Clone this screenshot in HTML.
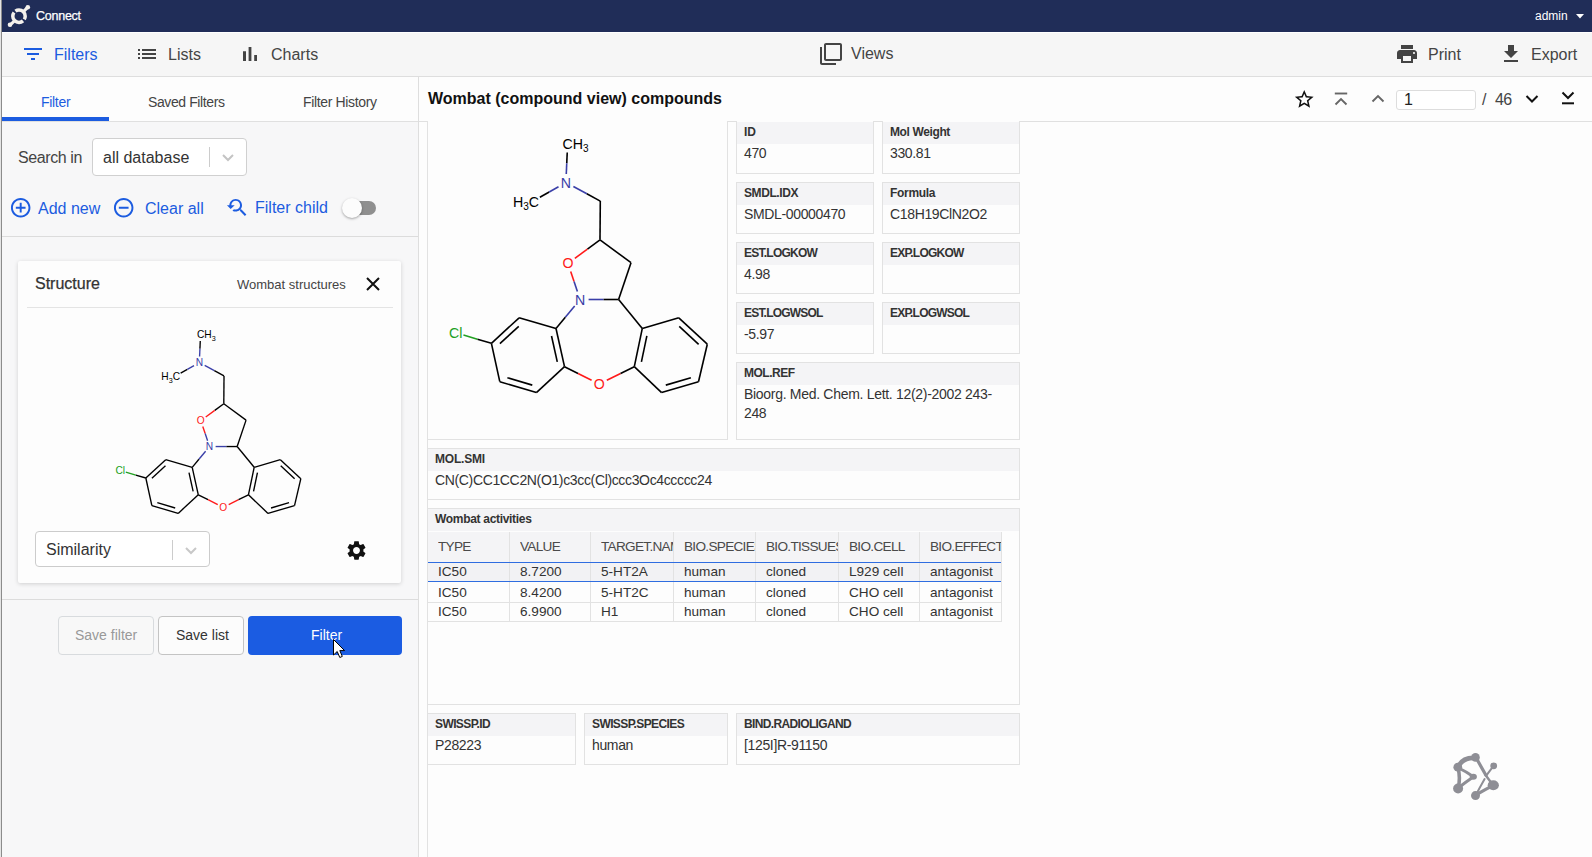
<!DOCTYPE html><html><head><meta charset="utf-8"><style>
*{box-sizing:border-box;margin:0;padding:0}
html,body{width:1592px;height:857px;overflow:hidden;background:#fdfdfd;font-family:"Liberation Sans",sans-serif;color:#333}
.a{position:absolute}
.t{position:absolute;white-space:nowrap;line-height:1}
svg{position:absolute;overflow:visible}
</style></head><body>
<div class="a" style="left:0px;top:0px;width:1px;height:857px;background:#e4e4e4"></div>
<div class="a" style="left:1px;top:0px;width:1px;height:857px;background:#8c8c8c"></div>
<div class="a" style="left:2px;top:0px;width:1590px;height:32px;background:#202d58"></div>
<div class="a" style="left:2px;top:32px;width:1590px;height:45px;background:#f6f6f6;border-top:1px solid #fff;border-bottom:1px solid #dedede"></div>
<div class="a" style="left:2px;top:77px;width:417px;height:780px;background:#f7f7f8;border-right:1px solid #dedede"></div>
<div class="a" style="left:2px;top:77px;width:416px;height:45px;background:#fdfdfd;border-bottom:1px solid #e0e0e0"></div>
<div class="a" style="left:2px;top:117px;width:107px;height:4px;background:#1c5ce0"></div>
<div class="a" style="left:419px;top:77px;width:1173px;height:45px;background:#fdfdfd;border-bottom:1px solid #e0e0e0"></div>
<div class="a" style="left:427px;top:122px;width:1px;height:735px;background:#e2e2e2"></div>
<svg style="left:0px;top:0px" width="40" height="32" viewBox="0 0 40 32"><g fill="none" stroke="#f4f1ec" stroke-width="3.5"><circle cx="19" cy="16.2" r="6.2" stroke-dasharray="3.4 1.8 17.7 1.8 14.26"/></g><g stroke="#f4f1ec" stroke-width="3" stroke-linecap="round"><line x1="23.5" y1="11.6" x2="27.6" y2="7.4"/><line x1="14.5" y1="20.8" x2="10.2" y2="24.8"/></g><g fill="#f4f1ec"><circle cx="27.8" cy="7.3" r="2.3"/><circle cx="10" cy="24.8" r="2.3"/></g></svg>
<div class="t" style="left:36px;top:10px;font-size:12.5px;color:#fff;font-weight:400;letter-spacing:-0.25px;-webkit-text-stroke:0.25px #fff">Connect</div>
<div class="t" style="left:1535px;top:10px;font-size:12px;color:#fff;font-weight:400;">admin</div>
<svg style="left:1576px;top:14px" width="8" height="5" viewBox="0 0 8 5"><path d="M0 0H8L4 4.5Z" fill="#fff"/></svg>
<svg style="left:21px;top:42px" width="24" height="24" viewBox="0 0 24 24"><path d="M10 18h4v-2h-4v2zM3 6v2h18V6H3zm3 7h12v-2H6v2z" fill="#1c5ce0"/></svg>
<div class="t" style="left:54px;top:47px;font-size:16px;color:#1c5ce0;font-weight:400;">Filters</div>
<svg style="left:135px;top:42px" width="24" height="24" viewBox="0 0 24 24"><path d="M3 13h2v-2H3v2zm0 4h2v-2H3v2zm0-8h2V7H3v2zm4 4h14v-2H7v2zm0 4h14v-2H7v2zM7 7v2h14V7H7z" fill="#444"/></svg>
<div class="t" style="left:168px;top:47px;font-size:16px;color:#444;font-weight:400;">Lists</div>
<svg style="left:238px;top:42px" width="24" height="24" viewBox="0 0 24 24"><path d="M5 9.2h3V19H5zM10.6 5h2.8v14h-2.8zm5.6 8H19v6h-2.8z" fill="#444"/></svg>
<div class="t" style="left:271px;top:47px;font-size:16px;color:#444;font-weight:400;">Charts</div>
<svg style="left:819px;top:42px" width="24" height="24" viewBox="0 0 24 24"><path d="M3 5H1v16c0 1.1.9 2 2 2h14v-2H3V5zm18-4H7c-1.1 0-2 .9-2 2v14c0 1.1.9 2 2 2h14c1.1 0 2-.9 2-2V3c0-1.1-.9-2-2-2zm0 16H7V3h14v14z" fill="#444"/></svg>
<div class="t" style="left:851px;top:46px;font-size:16px;color:#444;font-weight:400;">Views</div>
<svg style="left:1395px;top:42px" width="24" height="24" viewBox="0 0 24 24"><path d="M19 8H5c-1.66 0-3 1.34-3 3v6h4v4h12v-4h4v-6c0-1.66-1.34-3-3-3zm-3 11H8v-5h8v5zm3-7c-.55 0-1-.45-1-1s.45-1 1-1 1 .45 1 1-.45 1-1 1zm-1-9H6v4h12V3z" fill="#444"/></svg>
<div class="t" style="left:1428px;top:47px;font-size:16px;color:#444;font-weight:400;">Print</div>
<svg style="left:1499px;top:42px" width="24" height="24" viewBox="0 0 24 24"><path d="M19 9h-4V3H9v6H5l7 7 7-7zM5 18v2h14v-2H5z" fill="#444"/></svg>
<div class="t" style="left:1531px;top:47px;font-size:16px;color:#444;font-weight:400;">Export</div>
<div class="t" style="left:41px;top:95px;font-size:14px;color:#1c5ce0;font-weight:400;letter-spacing:-0.3px">Filter</div>
<div class="t" style="left:148px;top:95px;font-size:14px;color:#444;font-weight:400;letter-spacing:-0.4px">Saved Filters</div>
<div class="t" style="left:303px;top:95px;font-size:14px;color:#444;font-weight:400;letter-spacing:-0.35px">Filter History</div>
<div class="t" style="left:18px;top:150px;font-size:16px;color:#444;font-weight:400;letter-spacing:-0.4px">Search in</div>
<div class="a" style="left:92px;top:138px;width:155px;height:38px;background:#fff;border:1px solid #d0d0d0;border-radius:4px"></div>
<div class="t" style="left:103px;top:150px;font-size:16px;color:#333;font-weight:400;">all database</div>
<div class="a" style="left:209px;top:147px;width:1px;height:20px;background:#ccc"></div>
<svg style="left:222px;top:154px" width="12" height="7" viewBox="0 0 12 7"><path d="M1 1L6 6L11 1" fill="none" stroke="#c4c4c4" stroke-width="2"/></svg>
<svg style="left:8.6px;top:196px" width="23.4" height="23.4" viewBox="0 0 24 24"><path d="M13 7h-2v4H7v2h4v4h2v-4h4v-2h-4V7zm-1-5C6.48 2 2 6.48 2 12s4.48 10 10 10 10-4.48 10-10S17.52 2 12 2zm0 18c-4.41 0-8-3.59-8-8s3.59-8 8-8 8 3.59 8 8-3.59 8-8 8z" fill="#1c5ce0"/></svg>
<div class="t" style="left:38px;top:201px;font-size:16px;color:#1c5ce0;font-weight:400;">Add new</div>
<svg style="left:112px;top:196px" width="23.4" height="23.4" viewBox="0 0 24 24"><path d="M7 11v2h10v-2H7zm5-9C6.48 2 2 6.48 2 12s4.48 10 10 10 10-4.48 10-10S17.52 2 12 2zm0 18c-4.41 0-8-3.59-8-8s3.59-8 8-8 8 3.59 8 8-3.59 8-8 8z" fill="#1c5ce0"/></svg>
<div class="t" style="left:145px;top:201px;font-size:16px;color:#1c5ce0;font-weight:400;">Clear all</div>
<svg style="left:225px;top:196px" width="23.3" height="23.3" viewBox="0 0 24 24"><path d="M17.01 14h-.8l-.27-.27c.98-1.14 1.57-2.61 1.57-4.23 0-3.59-2.91-6.5-6.5-6.5s-6.5 3-6.5 6.5H2l3.84 4 4.16-4H6.51C6.51 7 8.53 5 11.01 5s4.5 2.01 4.5 4.5c0 2.48-2.02 4.5-4.5 4.5-.65 0-1.26-.14-1.82-.38L7.71 15.1c.97.57 2.09.9 3.3.9 1.61 0 3.08-.59 4.22-1.57l.27.27v.79l5.01 4.99L22 19l-4.99-5z" fill="#1c5ce0"/></svg>
<div class="t" style="left:255px;top:200px;font-size:16px;color:#1c5ce0;font-weight:400;">Filter child</div>
<div class="a" style="left:345px;top:201px;width:31px;height:14px;background:#8f8f8f;border-radius:7px"></div>
<div class="a" style="left:342px;top:198px;width:20px;height:20px;background:#fcfcfc;border-radius:50%;box-shadow:0 1px 2.5px rgba(0,0,0,.35)"></div>
<div class="a" style="left:2px;top:236px;width:416px;height:1px;background:#dcdcdc"></div>
<div class="a" style="left:18px;top:261px;width:383px;height:322px;background:#fdfdfd;border-radius:2px;box-shadow:0 1px 4px rgba(0,0,0,.16)"></div>
<div class="t" style="left:35px;top:276px;font-size:16px;color:#333;font-weight:400;-webkit-text-stroke:0.25px #333">Structure</div>
<div class="t" style="left:237px;top:278px;font-size:13px;color:#444;font-weight:400;">Wombat structures</div>
<svg style="left:366px;top:277px" width="14" height="14" viewBox="0 0 14 14"><path d="M1 1L13 13M13 1L1 13" stroke="#111" stroke-width="2"/></svg>
<div class="a" style="left:27px;top:307px;width:366px;height:1px;background:#e4e4e4"></div>
<svg style="left:0;top:0" width="1592" height="857" viewBox="0 0 1592 857"><g transform="translate(-207,231.5) scale(0.718)"><line x1="567.23" y1="152.49" x2="566.75" y2="163.25" stroke="#000" stroke-width="1.9"/><line x1="566.75" y1="163.25" x2="566.27" y2="174.01" stroke="#3a3fa8" stroke-width="1.9"/><line x1="539.89" y1="197.30" x2="549.20" y2="192.00" stroke="#000" stroke-width="1.9"/><line x1="549.20" y1="192.00" x2="558.51" y2="186.70" stroke="#3a3fa8" stroke-width="1.9"/><line x1="573.38" y1="186.54" x2="586.84" y2="193.82" stroke="#3a3fa8" stroke-width="1.9"/><line x1="586.84" y1="193.82" x2="600.30" y2="201.10" stroke="#000" stroke-width="1.9"/><line x1="600.30" y1="201.10" x2="600.00" y2="239.80" stroke="#000" stroke-width="1.9"/><line x1="600.00" y1="239.80" x2="587.42" y2="249.08" stroke="#000" stroke-width="1.9"/><line x1="587.42" y1="249.08" x2="574.84" y2="258.35" stroke="#ff1a1a" stroke-width="1.9"/><line x1="600.00" y1="239.80" x2="631.00" y2="262.70" stroke="#000" stroke-width="1.9"/><line x1="631.00" y1="262.70" x2="618.60" y2="299.50" stroke="#000" stroke-width="1.9"/><line x1="570.70" y1="271.46" x2="574.05" y2="281.45" stroke="#ff1a1a" stroke-width="1.9"/><line x1="574.05" y1="281.45" x2="577.40" y2="291.44" stroke="#3a3fa8" stroke-width="1.9"/><line x1="588.60" y1="299.50" x2="603.60" y2="299.50" stroke="#3a3fa8" stroke-width="1.9"/><line x1="603.60" y1="299.50" x2="618.60" y2="299.50" stroke="#000" stroke-width="1.9"/><line x1="574.67" y1="306.04" x2="565.33" y2="317.27" stroke="#3a3fa8" stroke-width="1.9"/><line x1="565.33" y1="317.27" x2="556.00" y2="328.50" stroke="#000" stroke-width="1.9"/><line x1="618.60" y1="299.50" x2="642.30" y2="328.40" stroke="#000" stroke-width="1.9"/><line x1="556.00" y1="328.50" x2="519.10" y2="317.80" stroke="#000" stroke-width="1.9"/><line x1="519.10" y1="317.80" x2="491.40" y2="343.30" stroke="#000" stroke-width="1.9"/><line x1="491.40" y1="343.30" x2="499.80" y2="381.70" stroke="#000" stroke-width="1.9"/><line x1="499.80" y1="381.70" x2="536.40" y2="392.60" stroke="#000" stroke-width="1.9"/><line x1="536.40" y1="392.60" x2="564.50" y2="366.70" stroke="#000" stroke-width="1.9"/><line x1="564.50" y1="366.70" x2="556.00" y2="328.50" stroke="#000" stroke-width="1.9"/><line x1="491.40" y1="343.30" x2="477.44" y2="339.18" stroke="#000" stroke-width="1.9"/><line x1="477.44" y1="339.18" x2="463.47" y2="335.06" stroke="#22a022" stroke-width="1.9"/><line x1="564.50" y1="366.70" x2="578.05" y2="373.49" stroke="#000" stroke-width="1.9"/><line x1="578.05" y1="373.49" x2="591.60" y2="380.29" stroke="#ff1a1a" stroke-width="1.9"/><line x1="606.82" y1="380.32" x2="620.56" y2="373.51" stroke="#ff1a1a" stroke-width="1.9"/><line x1="620.56" y1="373.51" x2="634.30" y2="366.70" stroke="#000" stroke-width="1.9"/><line x1="642.30" y1="328.40" x2="678.80" y2="317.80" stroke="#000" stroke-width="1.9"/><line x1="678.80" y1="317.80" x2="707.30" y2="344.20" stroke="#000" stroke-width="1.9"/><line x1="707.30" y1="344.20" x2="698.50" y2="381.70" stroke="#000" stroke-width="1.9"/><line x1="698.50" y1="381.70" x2="661.60" y2="392.60" stroke="#000" stroke-width="1.9"/><line x1="661.60" y1="392.60" x2="634.30" y2="366.70" stroke="#000" stroke-width="1.9"/><line x1="634.30" y1="366.70" x2="642.30" y2="328.40" stroke="#000" stroke-width="1.9"/><line x1="518.74" y1="326.29" x2="499.90" y2="343.63" stroke="#000" stroke-width="1.9"/><line x1="551.52" y1="335.97" x2="557.30" y2="361.94" stroke="#000" stroke-width="1.9"/><line x1="507.41" y1="377.71" x2="532.30" y2="385.12" stroke="#000" stroke-width="1.9"/><line x1="646.86" y1="335.90" x2="641.42" y2="361.94" stroke="#000" stroke-width="1.9"/><line x1="679.26" y1="326.41" x2="698.64" y2="344.36" stroke="#000" stroke-width="1.9"/><line x1="690.88" y1="377.69" x2="665.79" y2="385.11" stroke="#000" stroke-width="1.9"/><text x="565.90" y="187.50" fill="#3a3fa8" font-size="14.2" text-anchor="middle" font-family="Liberation Sans">N</text><text x="580.10" y="304.50" fill="#3a3fa8" font-size="14.2" text-anchor="middle" font-family="Liberation Sans">N</text><text x="568.00" y="268.40" fill="#ff1a1a" font-size="14.2" text-anchor="middle" font-family="Liberation Sans">O</text><text x="599.20" y="389.10" fill="#ff1a1a" font-size="14.2" text-anchor="middle" font-family="Liberation Sans">O</text><text x="455.80" y="337.80" fill="#22a022" font-size="14.2" text-anchor="middle" font-family="Liberation Sans">Cl</text><text x="562.60" y="148.60" fill="#000" font-size="14.2" font-family="Liberation Sans">CH<tspan font-size="10" dy="3.5">3</tspan></text><text x="513.00" y="206.90" fill="#000" font-size="14.2" font-family="Liberation Sans">H<tspan font-size="10" dy="3.5">3</tspan><tspan dy="-3.5">C</tspan></text></g></svg>
<div class="a" style="left:35px;top:531px;width:175px;height:36px;background:#fff;border:1px solid #ccc;border-radius:4px"></div>
<div class="t" style="left:46px;top:542px;font-size:16px;color:#333;font-weight:400;">Similarity</div>
<div class="a" style="left:172px;top:540px;width:1px;height:20px;background:#ccc"></div>
<svg style="left:185px;top:547px" width="12" height="7" viewBox="0 0 12 7"><path d="M1 1L6 6L11 1" fill="none" stroke="#c8c8c8" stroke-width="2"/></svg>
<svg style="left:345px;top:539px" width="23" height="23" viewBox="0 0 24 24"><path d="M19.14 12.94c.04-.3.06-.61.06-.94 0-.32-.02-.64-.07-.94l2.03-1.58c.18-.14.23-.41.12-.61l-1.92-3.32c-.12-.22-.37-.29-.59-.22l-2.39.96c-.5-.38-1.03-.7-1.62-.94l-.36-2.54c-.04-.24-.24-.41-.48-.41h-3.84c-.24 0-.43.17-.47.41l-.36 2.54c-.59.24-1.13.57-1.62.94l-2.39-.96c-.22-.08-.47 0-.59.22L2.74 8.87c-.12.21-.08.47.12.61l2.03 1.58c-.05.3-.09.63-.09.94s.02.64.07.94l-2.03 1.58c-.18.14-.23.41-.12.61l1.92 3.32c.12.22.37.29.59.22l2.39-.96c.5.38 1.03.7 1.62.94l.36 2.54c.05.24.24.41.48.41h3.84c.24 0 .44-.17.47-.41l.36-2.54c.59-.24 1.13-.56 1.62-.94l2.39.96c.22.08.47 0 .59-.22l1.92-3.32c.12-.22.07-.47-.12-.61l-2.01-1.58zM12 15.6c-1.98 0-3.6-1.62-3.6-3.6s1.62-3.6 3.6-3.6 3.6 1.62 3.6 3.6-1.62 3.6-3.6 3.6z" fill="#111"/></svg>
<div class="a" style="left:2px;top:599px;width:416px;height:1px;background:#dcdcdc"></div>
<div class="a" style="left:58px;top:616px;width:96px;height:39px;background:#f8f8f8;border:1px solid #d8dbde;border-radius:4px"></div>
<div class="t" style="left:75px;top:628px;font-size:14px;color:#999;font-weight:400;">Save filter</div>
<div class="a" style="left:158px;top:616px;width:86px;height:39px;background:#fcfcfc;border:1px solid #c4c4c4;border-radius:4px"></div>
<div class="t" style="left:176px;top:628px;font-size:14px;color:#333;font-weight:400;">Save list</div>
<div class="a" style="left:248px;top:616px;width:154px;height:39px;background:#1b5ce2;border-radius:4px"></div>
<div class="t" style="left:311px;top:628px;font-size:14px;color:#fff;font-weight:400;">Filter</div>
<svg style="left:333px;top:639px" width="13" height="20" viewBox="0 0 13 20"><path d="M0.5 0.5V16L4.2 12.5L6.8 18.5L9.3 17.4L6.8 11.6H11.6Z" fill="#fff" stroke="#000" stroke-width="1"/></svg>
<div class="t" style="left:428px;top:91px;font-size:16px;color:#111;font-weight:700;">Wombat (compound view) compounds</div>
<svg style="left:1292.5px;top:87.9px" width="22.5" height="22.5" viewBox="0 0 24 24"><path d="M22 9.24l-7.19-.62L12 2 9.19 8.63 2 9.24l5.46 4.73L5.82 21 12 17.27 18.18 21l-1.63-7.03L22 9.24zM12 15.4l-3.76 2.27 1-4.28-3.32-2.88 4.38-.38L12 6.1l1.71 4.04 4.38.38-3.32 2.88 1 4.28L12 15.4z" fill="#111"/></svg>
<svg style="left:1334px;top:92px" width="14" height="14" viewBox="0 0 14 14"><g fill="none" stroke="#666" stroke-width="1.9"><path d="M0.8 1.5H13.2"/><path d="M1.5 12.5L7 7L12.5 12.5"/></g></svg>
<svg style="left:1371px;top:94px" width="14" height="9" viewBox="0 0 14 9"><path d="M1.5 7.5L7 2L12.5 7.5" fill="none" stroke="#666" stroke-width="1.9"/></svg>
<div class="a" style="left:1396px;top:90px;width:80px;height:20px;background:#fff;border:1px solid #ddd;border-radius:3px"></div>
<div class="t" style="left:1404px;top:92px;font-size:16px;color:#222;font-weight:400;">1</div>
<div class="t" style="left:1482px;top:92px;font-size:16px;color:#444;font-weight:400;">/</div>
<div class="t" style="left:1495px;top:92px;font-size:16px;color:#444;font-weight:400;letter-spacing:-0.6px">46</div>
<svg style="left:1525px;top:94px" width="14" height="10" viewBox="0 0 14 10"><path d="M1.5 2L7 7.5L12.5 2" fill="none" stroke="#111" stroke-width="2"/></svg>
<svg style="left:1561px;top:91px" width="14" height="15" viewBox="0 0 14 15"><g fill="none" stroke="#111" stroke-width="2"><path d="M1.5 1.5L7 7L12.5 1.5"/><path d="M1 12.3H13"/></g></svg>
<div class="a" style="left:427px;top:121px;width:301px;height:319px;background:#fdfdfd;border:1px solid #e2e2e2;border-top:none"></div>
<svg style="left:0;top:0" width="1592" height="857" viewBox="0 0 1592 857"><line x1="567.23" y1="152.49" x2="566.75" y2="163.25" stroke="#000" stroke-width="1.6"/><line x1="566.75" y1="163.25" x2="566.27" y2="174.01" stroke="#3a3fa8" stroke-width="1.6"/><line x1="539.89" y1="197.30" x2="549.20" y2="192.00" stroke="#000" stroke-width="1.6"/><line x1="549.20" y1="192.00" x2="558.51" y2="186.70" stroke="#3a3fa8" stroke-width="1.6"/><line x1="573.38" y1="186.54" x2="586.84" y2="193.82" stroke="#3a3fa8" stroke-width="1.6"/><line x1="586.84" y1="193.82" x2="600.30" y2="201.10" stroke="#000" stroke-width="1.6"/><line x1="600.30" y1="201.10" x2="600.00" y2="239.80" stroke="#000" stroke-width="1.6"/><line x1="600.00" y1="239.80" x2="587.42" y2="249.08" stroke="#000" stroke-width="1.6"/><line x1="587.42" y1="249.08" x2="574.84" y2="258.35" stroke="#ff1a1a" stroke-width="1.6"/><line x1="600.00" y1="239.80" x2="631.00" y2="262.70" stroke="#000" stroke-width="1.6"/><line x1="631.00" y1="262.70" x2="618.60" y2="299.50" stroke="#000" stroke-width="1.6"/><line x1="570.70" y1="271.46" x2="574.05" y2="281.45" stroke="#ff1a1a" stroke-width="1.6"/><line x1="574.05" y1="281.45" x2="577.40" y2="291.44" stroke="#3a3fa8" stroke-width="1.6"/><line x1="588.60" y1="299.50" x2="603.60" y2="299.50" stroke="#3a3fa8" stroke-width="1.6"/><line x1="603.60" y1="299.50" x2="618.60" y2="299.50" stroke="#000" stroke-width="1.6"/><line x1="574.67" y1="306.04" x2="565.33" y2="317.27" stroke="#3a3fa8" stroke-width="1.6"/><line x1="565.33" y1="317.27" x2="556.00" y2="328.50" stroke="#000" stroke-width="1.6"/><line x1="618.60" y1="299.50" x2="642.30" y2="328.40" stroke="#000" stroke-width="1.6"/><line x1="556.00" y1="328.50" x2="519.10" y2="317.80" stroke="#000" stroke-width="1.6"/><line x1="519.10" y1="317.80" x2="491.40" y2="343.30" stroke="#000" stroke-width="1.6"/><line x1="491.40" y1="343.30" x2="499.80" y2="381.70" stroke="#000" stroke-width="1.6"/><line x1="499.80" y1="381.70" x2="536.40" y2="392.60" stroke="#000" stroke-width="1.6"/><line x1="536.40" y1="392.60" x2="564.50" y2="366.70" stroke="#000" stroke-width="1.6"/><line x1="564.50" y1="366.70" x2="556.00" y2="328.50" stroke="#000" stroke-width="1.6"/><line x1="491.40" y1="343.30" x2="477.44" y2="339.18" stroke="#000" stroke-width="1.6"/><line x1="477.44" y1="339.18" x2="463.47" y2="335.06" stroke="#22a022" stroke-width="1.6"/><line x1="564.50" y1="366.70" x2="578.05" y2="373.49" stroke="#000" stroke-width="1.6"/><line x1="578.05" y1="373.49" x2="591.60" y2="380.29" stroke="#ff1a1a" stroke-width="1.6"/><line x1="606.82" y1="380.32" x2="620.56" y2="373.51" stroke="#ff1a1a" stroke-width="1.6"/><line x1="620.56" y1="373.51" x2="634.30" y2="366.70" stroke="#000" stroke-width="1.6"/><line x1="642.30" y1="328.40" x2="678.80" y2="317.80" stroke="#000" stroke-width="1.6"/><line x1="678.80" y1="317.80" x2="707.30" y2="344.20" stroke="#000" stroke-width="1.6"/><line x1="707.30" y1="344.20" x2="698.50" y2="381.70" stroke="#000" stroke-width="1.6"/><line x1="698.50" y1="381.70" x2="661.60" y2="392.60" stroke="#000" stroke-width="1.6"/><line x1="661.60" y1="392.60" x2="634.30" y2="366.70" stroke="#000" stroke-width="1.6"/><line x1="634.30" y1="366.70" x2="642.30" y2="328.40" stroke="#000" stroke-width="1.6"/><line x1="518.74" y1="326.29" x2="499.90" y2="343.63" stroke="#000" stroke-width="1.6"/><line x1="551.52" y1="335.97" x2="557.30" y2="361.94" stroke="#000" stroke-width="1.6"/><line x1="507.41" y1="377.71" x2="532.30" y2="385.12" stroke="#000" stroke-width="1.6"/><line x1="646.86" y1="335.90" x2="641.42" y2="361.94" stroke="#000" stroke-width="1.6"/><line x1="679.26" y1="326.41" x2="698.64" y2="344.36" stroke="#000" stroke-width="1.6"/><line x1="690.88" y1="377.69" x2="665.79" y2="385.11" stroke="#000" stroke-width="1.6"/><text x="565.90" y="187.50" fill="#3a3fa8" font-size="14.2" text-anchor="middle" font-family="Liberation Sans">N</text><text x="580.10" y="304.50" fill="#3a3fa8" font-size="14.2" text-anchor="middle" font-family="Liberation Sans">N</text><text x="568.00" y="268.40" fill="#ff1a1a" font-size="14.2" text-anchor="middle" font-family="Liberation Sans">O</text><text x="599.20" y="389.10" fill="#ff1a1a" font-size="14.2" text-anchor="middle" font-family="Liberation Sans">O</text><text x="455.80" y="337.80" fill="#22a022" font-size="14.2" text-anchor="middle" font-family="Liberation Sans">Cl</text><text x="562.60" y="148.60" fill="#000" font-size="14.2" font-family="Liberation Sans">CH<tspan font-size="10" dy="3.5">3</tspan></text><text x="513.00" y="206.90" fill="#000" font-size="14.2" font-family="Liberation Sans">H<tspan font-size="10" dy="3.5">3</tspan><tspan dy="-3.5">C</tspan></text></svg>
<div class="a" style="left:736px;top:121px;width:138px;height:53px;background:#fdfdfd;border:1px solid #e2e2e2;border-top:none"></div>
<div class="a" style="left:737px;top:122px;width:136px;height:22px;background:#f4f4f6"></div>
<div class="t" style="left:744px;top:126px;font-size:12px;color:#333;font-weight:700;letter-spacing:0px">ID</div>
<div class="t" style="left:744px;top:146px;font-size:14px;color:#333;font-weight:400;letter-spacing:-0.35px">470</div>
<div class="a" style="left:882px;top:121px;width:138px;height:53px;background:#fdfdfd;border:1px solid #e2e2e2;border-top:none"></div>
<div class="a" style="left:883px;top:122px;width:136px;height:22px;background:#f4f4f6"></div>
<div class="t" style="left:890px;top:126px;font-size:12px;color:#333;font-weight:700;letter-spacing:-0.38px">Mol Weight</div>
<div class="t" style="left:890px;top:146px;font-size:14px;color:#333;font-weight:400;letter-spacing:-0.35px">330.81</div>
<div class="a" style="left:736px;top:182px;width:138px;height:52px;background:#fdfdfd;border:1px solid #e2e2e2"></div>
<div class="a" style="left:737px;top:183px;width:136px;height:22px;background:#f4f4f6"></div>
<div class="t" style="left:744px;top:187px;font-size:12px;color:#333;font-weight:700;letter-spacing:-0.42px">SMDL.IDX</div>
<div class="t" style="left:744px;top:207px;font-size:14px;color:#333;font-weight:400;letter-spacing:-0.35px">SMDL-00000470</div>
<div class="a" style="left:882px;top:182px;width:138px;height:52px;background:#fdfdfd;border:1px solid #e2e2e2"></div>
<div class="a" style="left:883px;top:183px;width:136px;height:22px;background:#f4f4f6"></div>
<div class="t" style="left:890px;top:187px;font-size:12px;color:#333;font-weight:700;letter-spacing:-0.3px">Formula</div>
<div class="t" style="left:890px;top:207px;font-size:14px;color:#333;font-weight:400;letter-spacing:-0.35px">C18H19ClN2O2</div>
<div class="a" style="left:736px;top:242px;width:138px;height:52px;background:#fdfdfd;border:1px solid #e2e2e2"></div>
<div class="a" style="left:737px;top:243px;width:136px;height:22px;background:#f4f4f6"></div>
<div class="t" style="left:744px;top:247px;font-size:12px;color:#333;font-weight:700;letter-spacing:-0.75px">EST.LOGKOW</div>
<div class="t" style="left:744px;top:267px;font-size:14px;color:#333;font-weight:400;letter-spacing:-0.35px">4.98</div>
<div class="a" style="left:882px;top:242px;width:138px;height:52px;background:#fdfdfd;border:1px solid #e2e2e2"></div>
<div class="a" style="left:883px;top:243px;width:136px;height:22px;background:#f4f4f6"></div>
<div class="t" style="left:890px;top:247px;font-size:12px;color:#333;font-weight:700;letter-spacing:-0.75px">EXP.LOGKOW</div>
<div class="a" style="left:736px;top:302px;width:138px;height:52px;background:#fdfdfd;border:1px solid #e2e2e2"></div>
<div class="a" style="left:737px;top:303px;width:136px;height:22px;background:#f4f4f6"></div>
<div class="t" style="left:744px;top:307px;font-size:12px;color:#333;font-weight:700;letter-spacing:-0.8px">EST.LOGWSOL</div>
<div class="t" style="left:744px;top:327px;font-size:14px;color:#333;font-weight:400;letter-spacing:-0.35px">-5.97</div>
<div class="a" style="left:882px;top:302px;width:138px;height:52px;background:#fdfdfd;border:1px solid #e2e2e2"></div>
<div class="a" style="left:883px;top:303px;width:136px;height:22px;background:#f4f4f6"></div>
<div class="t" style="left:890px;top:307px;font-size:12px;color:#333;font-weight:700;letter-spacing:-0.8px">EXP.LOGWSOL</div>
<div class="a" style="left:736px;top:362px;width:284px;height:78px;background:#fdfdfd;border:1px solid #e2e2e2"></div>
<div class="a" style="left:737px;top:363px;width:282px;height:22px;background:#f4f4f6"></div>
<div class="t" style="left:744px;top:367px;font-size:12px;color:#333;font-weight:700;letter-spacing:-0.5px">MOL.REF</div>
<div class="t" style="left:744px;top:387px;font-size:14px;color:#333;font-weight:400;letter-spacing:-0.3px">Bioorg. Med. Chem. Lett. 12(2)-2002 243-</div>
<div class="t" style="left:744px;top:406px;font-size:14px;color:#333;font-weight:400;letter-spacing:-0.35px">248</div>
<div class="a" style="left:427px;top:448px;width:593px;height:52px;background:#fdfdfd;border:1px solid #e2e2e2"></div>
<div class="a" style="left:428px;top:449px;width:591px;height:22px;background:#f4f4f6"></div>
<div class="t" style="left:435px;top:453px;font-size:12px;color:#333;font-weight:700;letter-spacing:-0.2px">MOL.SMI</div>
<div class="t" style="left:435px;top:473px;font-size:14px;color:#333;font-weight:400;letter-spacing:-0.35px">CN(C)CC1CC2N(O1)c3cc(Cl)ccc3Oc4ccccc24</div>
<div class="a" style="left:427px;top:508px;width:593px;height:197px;background:#fdfdfd;border:1px solid #e2e2e2"></div>
<div class="a" style="left:428px;top:509px;width:591px;height:22px;background:#f4f4f6"></div>
<div class="t" style="left:435px;top:513px;font-size:12px;color:#333;font-weight:700;letter-spacing:-0.31px">Wombat activities</div>
<div class="a" style="left:428px;top:532px;width:573px;height:30px;background:#f4f4f6"></div>
<div class="a" style="left:428px;top:563px;width:573px;height:18px;background:#f2f2f4"></div>
<div class="a" style="left:428px;top:602px;width:573px;height:1px;background:#e2e2e2"></div>
<div class="a" style="left:428px;top:621px;width:573px;height:1px;background:#e2e2e2"></div>
<div class="a" style="left:509px;top:532px;width:1px;height:90px;background:#e2e2e2"></div>
<div class="a" style="left:590px;top:532px;width:1px;height:90px;background:#e2e2e2"></div>
<div class="a" style="left:673px;top:532px;width:1px;height:90px;background:#e2e2e2"></div>
<div class="a" style="left:755px;top:532px;width:1px;height:90px;background:#e2e2e2"></div>
<div class="a" style="left:838px;top:532px;width:1px;height:90px;background:#e2e2e2"></div>
<div class="a" style="left:919px;top:532px;width:1px;height:90px;background:#e2e2e2"></div>
<div class="a" style="left:1001px;top:532px;width:1px;height:90px;background:#e2e2e2"></div>
<div class="a" style="left:428px;top:562px;width:573px;height:1px;background:#2f6de0"></div>
<div class="a" style="left:428px;top:581px;width:573px;height:1px;background:#2f6de0"></div>
<div class="t" style="left:438px;top:540px;width:71px;overflow:hidden;font-size:13.6px;color:#4a4a4a;letter-spacing:-0.7px">TYPE</div>
<div class="t" style="left:520px;top:540px;width:70px;overflow:hidden;font-size:13.6px;color:#4a4a4a;letter-spacing:-0.7px">VALUE</div>
<div class="t" style="left:601px;top:540px;width:72px;overflow:hidden;font-size:13.6px;color:#4a4a4a;letter-spacing:-0.7px">TARGET.NAME</div>
<div class="t" style="left:684px;top:540px;width:71px;overflow:hidden;font-size:13.6px;color:#4a4a4a;letter-spacing:-0.7px">BIO.SPECIES</div>
<div class="t" style="left:766px;top:540px;width:72px;overflow:hidden;font-size:13.6px;color:#4a4a4a;letter-spacing:-0.7px">BIO.TISSUES</div>
<div class="t" style="left:849px;top:540px;width:70px;overflow:hidden;font-size:13.6px;color:#4a4a4a;letter-spacing:-0.7px">BIO.CELL</div>
<div class="t" style="left:930px;top:540px;width:71px;overflow:hidden;font-size:13.6px;color:#4a4a4a;letter-spacing:-0.7px">BIO.EFFECT</div>
<div class="t" style="left:438px;top:565px;width:71px;overflow:hidden;font-size:13.6px;color:#333;letter-spacing:0px">IC50</div>
<div class="t" style="left:520px;top:565px;width:70px;overflow:hidden;font-size:13.6px;color:#333;letter-spacing:0px">8.7200</div>
<div class="t" style="left:601px;top:565px;width:72px;overflow:hidden;font-size:13.6px;color:#333;letter-spacing:0px">5-HT2A</div>
<div class="t" style="left:684px;top:565px;width:71px;overflow:hidden;font-size:13.6px;color:#333;letter-spacing:0px">human</div>
<div class="t" style="left:766px;top:565px;width:72px;overflow:hidden;font-size:13.6px;color:#333;letter-spacing:0px">cloned</div>
<div class="t" style="left:849px;top:565px;width:70px;overflow:hidden;font-size:13.6px;color:#333;letter-spacing:0px">L929 cell</div>
<div class="t" style="left:930px;top:565px;width:71px;overflow:hidden;font-size:13.6px;color:#333;letter-spacing:0px">antagonist</div>
<div class="t" style="left:438px;top:586px;width:71px;overflow:hidden;font-size:13.6px;color:#333;letter-spacing:0px">IC50</div>
<div class="t" style="left:520px;top:586px;width:70px;overflow:hidden;font-size:13.6px;color:#333;letter-spacing:0px">8.4200</div>
<div class="t" style="left:601px;top:586px;width:72px;overflow:hidden;font-size:13.6px;color:#333;letter-spacing:0px">5-HT2C</div>
<div class="t" style="left:684px;top:586px;width:71px;overflow:hidden;font-size:13.6px;color:#333;letter-spacing:0px">human</div>
<div class="t" style="left:766px;top:586px;width:72px;overflow:hidden;font-size:13.6px;color:#333;letter-spacing:0px">cloned</div>
<div class="t" style="left:849px;top:586px;width:70px;overflow:hidden;font-size:13.6px;color:#333;letter-spacing:0px">CHO cell</div>
<div class="t" style="left:930px;top:586px;width:71px;overflow:hidden;font-size:13.6px;color:#333;letter-spacing:0px">antagonist</div>
<div class="t" style="left:438px;top:605px;width:71px;overflow:hidden;font-size:13.6px;color:#333;letter-spacing:0px">IC50</div>
<div class="t" style="left:520px;top:605px;width:70px;overflow:hidden;font-size:13.6px;color:#333;letter-spacing:0px">6.9900</div>
<div class="t" style="left:601px;top:605px;width:72px;overflow:hidden;font-size:13.6px;color:#333;letter-spacing:0px">H1</div>
<div class="t" style="left:684px;top:605px;width:71px;overflow:hidden;font-size:13.6px;color:#333;letter-spacing:0px">human</div>
<div class="t" style="left:766px;top:605px;width:72px;overflow:hidden;font-size:13.6px;color:#333;letter-spacing:0px">cloned</div>
<div class="t" style="left:849px;top:605px;width:70px;overflow:hidden;font-size:13.6px;color:#333;letter-spacing:0px">CHO cell</div>
<div class="t" style="left:930px;top:605px;width:71px;overflow:hidden;font-size:13.6px;color:#333;letter-spacing:0px">antagonist</div>
<div class="a" style="left:427px;top:713px;width:149px;height:52px;background:#fdfdfd;border:1px solid #e2e2e2"></div>
<div class="a" style="left:428px;top:714px;width:147px;height:22px;background:#f4f4f6"></div>
<div class="t" style="left:435px;top:718px;font-size:12px;color:#333;font-weight:700;letter-spacing:-0.6px">SWISSP.ID</div>
<div class="t" style="left:435px;top:738px;font-size:14px;color:#333;font-weight:400;letter-spacing:-0.35px">P28223</div>
<div class="a" style="left:584px;top:713px;width:144px;height:52px;background:#fdfdfd;border:1px solid #e2e2e2"></div>
<div class="a" style="left:585px;top:714px;width:142px;height:22px;background:#f4f4f6"></div>
<div class="t" style="left:592px;top:718px;font-size:12px;color:#333;font-weight:700;letter-spacing:-0.6px">SWISSP.SPECIES</div>
<div class="t" style="left:592px;top:738px;font-size:14px;color:#333;font-weight:400;letter-spacing:-0.35px">human</div>
<div class="a" style="left:736px;top:713px;width:284px;height:52px;background:#fdfdfd;border:1px solid #e2e2e2"></div>
<div class="a" style="left:737px;top:714px;width:282px;height:22px;background:#f4f4f6"></div>
<div class="t" style="left:744px;top:718px;font-size:12px;color:#333;font-weight:700;letter-spacing:-0.64px">BIND.RADIOLIGAND</div>
<div class="t" style="left:744px;top:738px;font-size:14px;color:#333;font-weight:400;letter-spacing:-0.35px">[125I]R-91150</div>
<svg style="left:0px;top:0px" width="1592" height="857" viewBox="0 0 1592 857"><g stroke="#8e8e95" fill="none" stroke-linecap="round"><path d="M1475.5 758 Q1463 757 1457.8 767" stroke-width="4.6"/><path d="M1457.8 767 Q1460.8 778 1458.1 788.5" stroke-width="3.6"/><path d="M1457.8 767.5 Q1466 771.5 1473.5 776.8" stroke-width="3"/><path d="M1458.1 788 Q1466 782 1473.5 776.8" stroke-width="3"/><path d="M1476 757.5 Q1481.5 767.5 1485.8 775" stroke-width="3.2"/><path d="M1485.5 775 L1493.1 785.3" stroke-width="2.4"/><path d="M1493.75 765.6 L1486.6 775.2" stroke-width="2"/><path d="M1484.6 779 Q1479.5 788 1475.5 795.7" stroke-width="2"/><path d="M1475.5 795.2 Q1485 789.5 1493.1 785.3" stroke-width="3.2"/></g><g fill="#8e8e95"><circle cx="1475.5" cy="757.4" r="4.3"/><circle cx="1457.8" cy="767.2" r="4.4"/><circle cx="1458.1" cy="788.5" r="5"/><ellipse cx="1473.3" cy="776.8" rx="3.6" ry="3"/><circle cx="1493.7" cy="765.8" r="3.4"/><ellipse cx="1493.3" cy="785.3" rx="5.6" ry="5"/><circle cx="1475.5" cy="795.6" r="4.5"/></g></svg>
</body></html>
